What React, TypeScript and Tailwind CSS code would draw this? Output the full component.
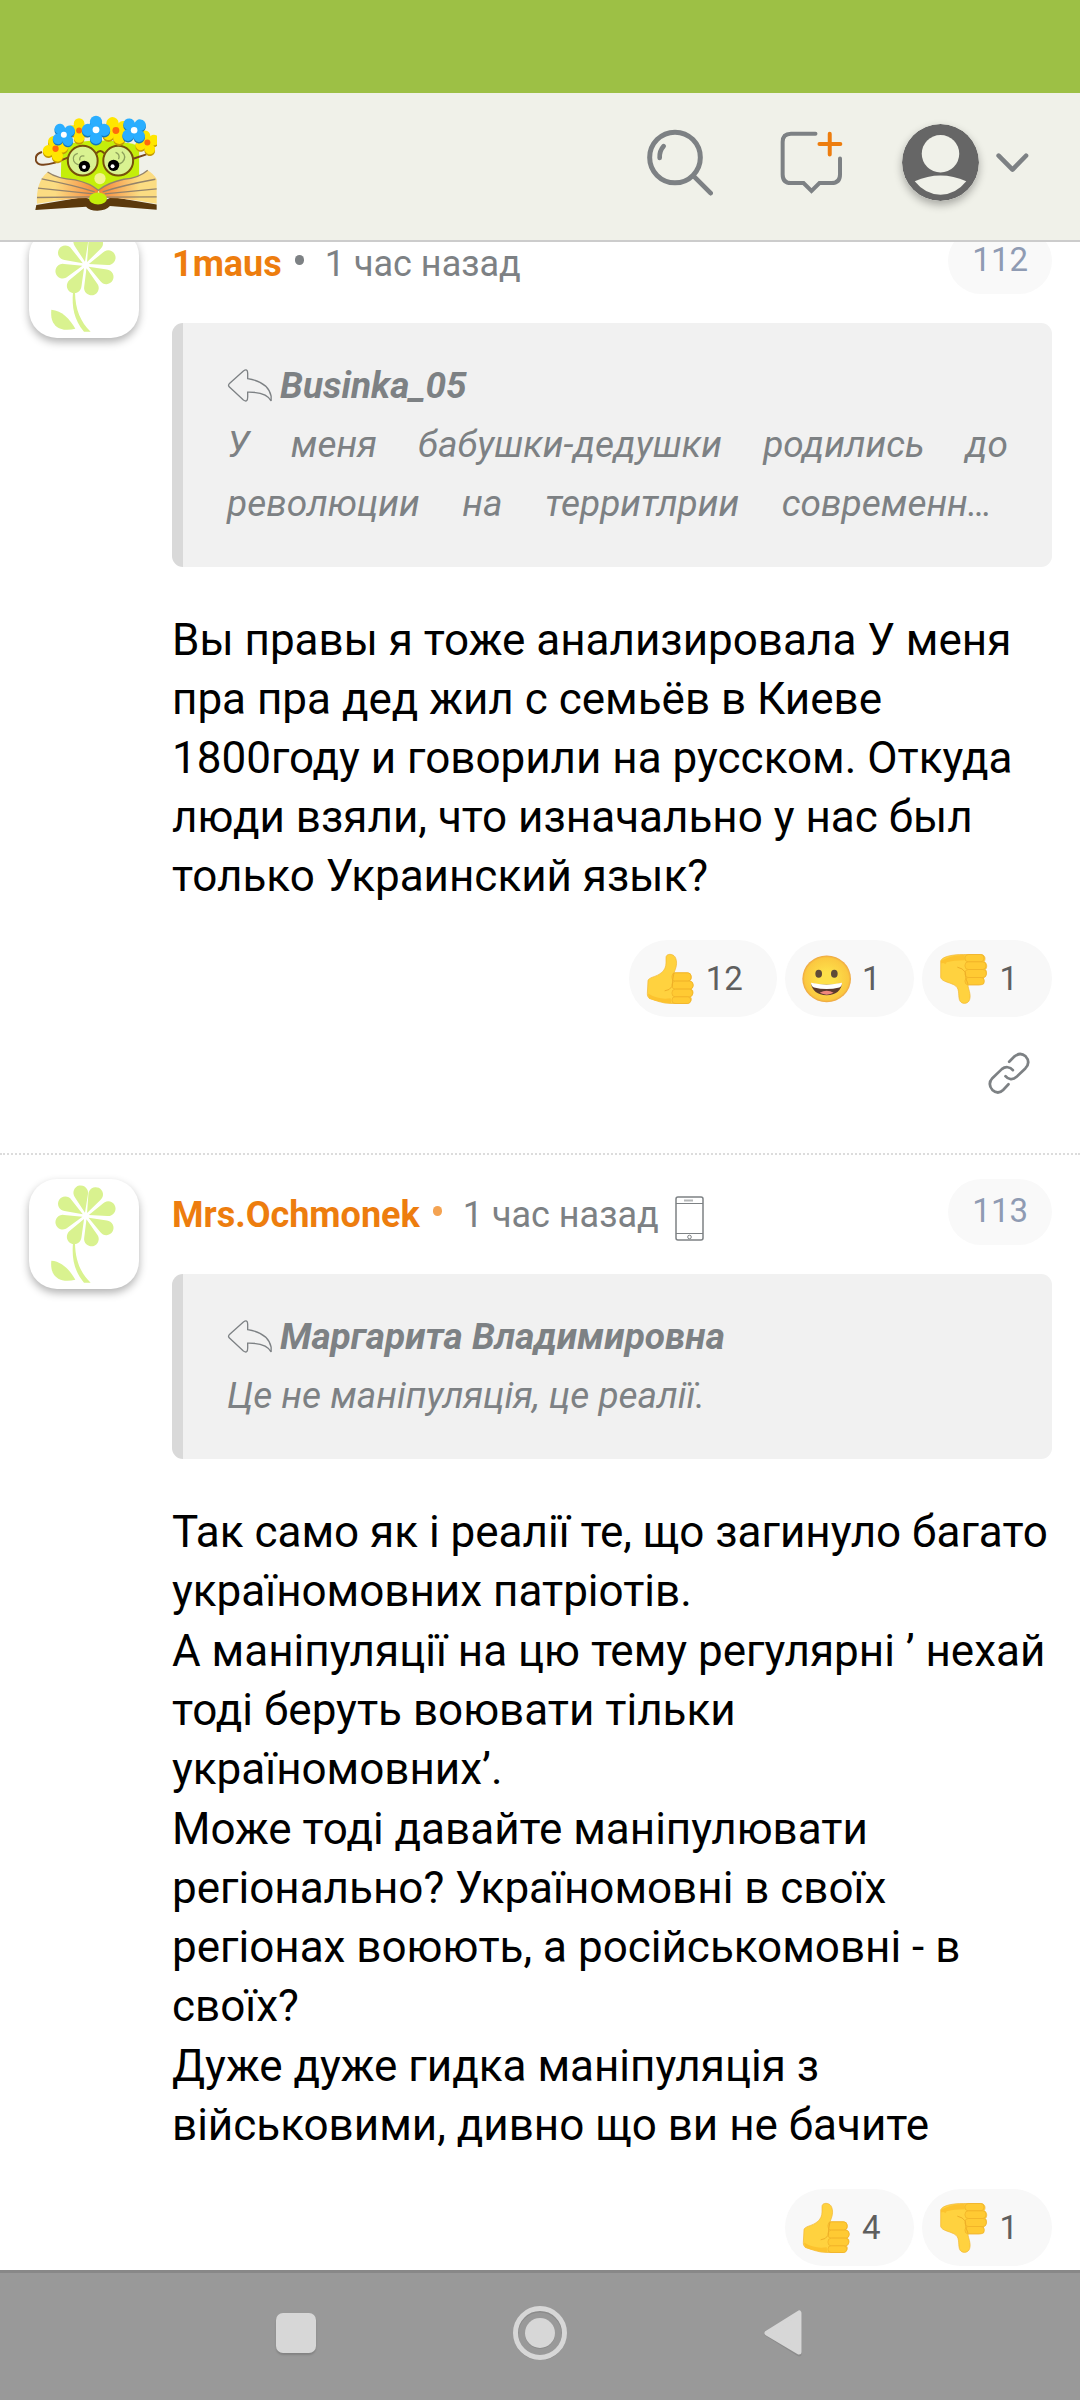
import type { ReactNode } from "react";

function Logo() {
  const blue = [
    { x: 191, y: 158, r: 10, s: 1 },
    { x: 288, y: 143, r: 45, s: 1.15 },
    { x: 403, y: 144, r: 5, s: 1.1 },
  ];
  const yellow = [
    { x: 166, y: 200, r: 30, s: 1.05 },
    { x: 237, y: 145, r: 45, s: 1 },
    { x: 348, y: 145, r: 20, s: 1.15 },
    { x: 443, y: 181, r: 25, s: 1 },
  ];

  return (
    <svg viewBox="104 99 368 288" className="w-[122px] h-24" aria-hidden="true">
      <defs>
        <linearGradient id="page-left" x1="0" x2="1">
          <stop offset="0.3" stopColor="#fbdc82" />
          <stop offset="1" stopColor="#f58238" />
        </linearGradient>
        <linearGradient id="page-right" x1="1" x2="0">
          <stop offset="0.3" stopColor="#fbdc82" />
          <stop offset="1" stopColor="#f58238" />
        </linearGradient>
        <g id="petals">
          <circle cx="-15" cy="-15" r="16" />
          <circle cx="15" cy="-15" r="16" />
          <circle cx="-15" cy="15" r="16" />
          <circle cx="15" cy="15" r="16" />
          <circle r="12" />
        </g>
      </defs>
      <path d="M184 190 Q300 160 418 190 L418 290 L300 330 L182 290 Z" fill="#c4ee0a" />
      {/* book */}
      <path d="M108 370 L238 348 Q265 348 268 352 L322 352 Q330 346 350 348 L471 368 V384 L330 373 Q318 387 292 387 Q268 387 258 375 L105 385 Z" fill="#5b390c" />
      <path d="M142 270 Q170 290 225 294 Q270 304 295 325 L290 350 Q240 344 110 366 Q106 300 142 270 Z" fill="url(#page-left)" />
      <path d="M444 265 Q415 290 372 292 Q325 302 297 325 L300 350 Q350 344 471 366 V292 Q462 276 444 265 Z" fill="url(#page-right)" />
      <g fill="none" stroke="#94836a" strokeWidth="4">
        <path d="M142 270 Q170 290 225 294 Q270 304 295 325 Q325 302 372 292 Q415 290 444 265" />
        <path d="M124 291 Q220 310 284 330 M113 319 L280 336 M110 347 L276 345" />
        <path d="M467 292 Q370 310 308 330 M471 321 L314 336 M471 345 L318 346" />
      </g>
      <ellipse cx="294" cy="350" rx="27" ry="18" fill="#c4ee0a" />
      <circle cx="300" cy="290" r="17" fill="#f3f38e" />
      {/* glasses */}
      <path d="M125 210 Q103 216 107 236 Q113 257 165 242 L205 226 M400 230 L440 217" fill="none" stroke="#79451a" strokeWidth="6" />
      <g fill="#d9f291" stroke="#76500b" strokeWidth="6">
        <circle cx="248" cy="236" r="45" />
        <circle cx="355" cy="236" r="45" />
      </g>
      <path d="M289 214 Q301 199 313 214" fill="none" stroke="#76500b" strokeWidth="6" />
      <g fill="none" stroke="#8da05c" strokeWidth="4">
        <path d="M233 214 Q215 220 221 237 Q228 249 242 250 M253 222 Q237 219 239 235" />
        <path d="M366 209 Q382 224 368 240 Q362 246 354 246 M347 211 Q362 216 356 232" />
      </g>
      <circle cx="253" cy="253" r="17" />
      <circle cx="341" cy="250" r="17" />
      <circle cx="252" cy="255" r="6" fill="#fff" />
      <circle cx="338" cy="253" r="6" fill="#fff" />
      {/* wreath */}
      {yellow.map((f) => (
        <g key={f.x} transform={`translate(${f.x} ${f.y}) scale(${f.s})`}>
          <use href="#petals" fill="#c49a05" transform={`translate(0 5) rotate(${f.r})`} />
          <use href="#petals" fill="#ffe600" transform={`rotate(${f.r})`} />
          <circle r="9" fill="#ff6a0c" />
        </g>
      ))}
      {blue.map((f) => (
        <g key={f.x} transform={`translate(${f.x} ${f.y}) scale(${f.s})`}>
          <use href="#petals" fill="#1476b8" transform={`translate(0 4) rotate(${f.r})`} />
          <use href="#petals" fill="#2aaeff" transform={`rotate(${f.r})`} />
          <circle r="9" fill="#fff" />
        </g>
      ))}
    </svg>
  );
}

function SearchIcon() {
  return (
    <svg viewBox="81 122 198 200" className="w-[66px] h-[67px]" fill="none" stroke="#7d8184" strokeLinecap="round" aria-hidden="true">
      <circle cx="165" cy="207" r="76" strokeWidth="15" />
      <path d="M221 263 L272 314" strokeWidth="14" />
      <path d="M131 173 Q118 187 119 208" strokeWidth="14" />
    </svg>
  );
}

function NewMessageIcon() {
  return (
    <svg viewBox="482 127 188 190" className="w-[63px] h-[63px]" fill="none" strokeWidth="12" strokeLinecap="round" aria-hidden="true">
      <path d="M588 135 H514 Q489 135 489 160 V258 Q489 284 514 284 H552 L576 308 L600 284 H636 Q662 284 662 258 V210" stroke="#7d8184" />
      <path d="M631 135 V198 M600 166 H663" stroke="#ed7d0e" />
    </svg>
  );
}

function UserIcon() {
  return (
    <svg viewBox="0 0 230 230" className="w-[77px] h-[77px] rounded-full shadow-[0_4px_8px_rgba(0,0,0,0.3)]" aria-hidden="true">
      <circle cx="115" cy="115" r="115" fill="#666" />
      <circle cx="115" cy="89" r="56" fill="#f0f1e9" />
      <path d="M38 171 Q115 136 192 171 Q160 211 115 211 Q70 211 38 171 Z" fill="#f0f1e9" />
    </svg>
  );
}

function ChevronIcon() {
  return (
    <svg viewBox="1128 187 100 60" className="w-[33px] h-5" fill="none" stroke="#7d8184" strokeWidth="14" strokeLinecap="round" strokeLinejoin="round" aria-hidden="true">
      <path d="M1136 195 L1178 237 L1219 195" />
    </svg>
  );
}

function Flower() {
  const petals = [258, 295, 342, 30, 76, 119, 165, 211];

  return (
    <svg viewBox="87 444 330 330" className="w-full h-full" fill="#d9f28f" aria-hidden="true">
      {petals.map((angle) => (
        <path key={angle} d="M0 -10 L-20 -62 A22 22 0 1 1 20 -62 Z" transform={`translate(257 555) rotate(${angle + 90})`} />
      ))}
      <path d="M219 636 C215 680 222 720 252 755 L272 755 C242 726 226 690 225 636 Z" />
      <path d="M154 689 C186 691 210 718 226 746 C190 756 148 746 154 689 Z" />
    </svg>
  );
}

function ReplyIcon() {
  return (
    <svg viewBox="228 418 138 106" className="w-[46px] h-[35px]" fill="none" stroke="#7d8184" strokeWidth="4" aria-hidden="true">
      <path d="M234 466 L277 427 Q290 418 290 434 V450 Q352 460 361 503 V518 Q348 490 290 491 V506 Q290 524 277 515 L234 475 Q230 470 234 466 Z" />
    </svg>
  );
}

function PhoneIcon() {
  return (
    <svg viewBox="0 0 29 46" className="w-[29px] h-[46px]" fill="none" stroke="#7d8184" aria-hidden="true">
      <rect x="1" y="1" width="27" height="43" rx="2" strokeWidth="1.5" />
      <path d="M1 7.5 H28 M1 37.5 H28" />
      <path d="M9 4.5 H18" strokeWidth="2" stroke="#b5b7b8" />
      <circle cx="14.5" cy="41" r="1.8" />
    </svg>
  );
}

function LinkIcon() {
  return (
    <svg viewBox="1165 396 125 125" className="w-[42px] h-[42px]" fill="none" stroke="#7d8184" strokeWidth="8" strokeLinecap="round" aria-hidden="true">
      <path d="M1228 425 L1244 409 C1256 399 1268 401 1277 409 C1287 420 1287 433 1276 445 L1250 470 C1239 480 1225 478 1217 468" />
      <path d="M1226 492 L1210 509 C1200 519 1188 518 1178 509 C1168 497 1168 485 1178 474 L1206 447 C1217 438 1231 440 1239 450" />
    </svg>
  );
}

function ThumbUp() {
  return (
    <svg viewBox="132 101 147 155" className="w-[49px] h-[52px]" aria-hidden="true">
      <path d="M138 183 C140 174 160 172 172 164 C188 154 192 142 192 128 V114 C192 101 216 101 221 116 C227 132 222 145 216 160 H256 C270 160 272 180 262 184 C278 188 276 206 266 208 C277 212 274 229 264 231 C272 236 268 251 255 252 H206 C180 252 160 242 142 237 C137 232 136 228 136 222 Z" fill="#ffd23f" stroke="#f2b52f" strokeWidth="2" />
      <path d="M138 222 Q170 242 206 236 L208 251 Q175 250 142 237 Z" fill="#fcc22e" />
      <g fill="#ffca33" stroke="#eeaf27" strokeWidth="2">
        <rect x="210" y="160" width="57" height="25" rx="10" />
        <rect x="210" y="185" width="63" height="24" rx="10" />
        <rect x="210" y="209" width="62" height="23" rx="10" />
        <rect x="210" y="232" width="56" height="20" rx="9" />
      </g>
      <path d="M216 160 Q211 178 211 200 Q203 213 188 214" fill="none" stroke="#eeaf27" strokeWidth="3" />
    </svg>
  );
}

function ThumbDown() {
  return (
    <svg viewBox="1017 101 147 155" className="w-[49px] h-[52px]" aria-hidden="true">
      <path d="M1022 124 C1028 110 1060 105 1090 105 H1142 C1156 105 1158 120 1152 127 C1162 130 1162 146 1156 150 C1162 155 1160 172 1150 174 C1152 188 1146 195 1136 196 H1104 C1104 208 1114 224 1109 240 C1105 255 1082 256 1078 240 C1074 222 1080 206 1062 196 C1046 188 1026 186 1022 174 Z" fill="#ffd23f" stroke="#f2b52f" strokeWidth="2" />
      <path d="M1023 124 Q1050 108 1094 106 V122 Q1060 122 1040 128 L1036 134 Q1030 128 1023 132 Z" fill="#fcc22e" />
      <g fill="#ffca33" stroke="#eeaf27" strokeWidth="2">
        <rect x="1095" y="105" width="57" height="22" rx="10" />
        <rect x="1095" y="127" width="63" height="23" rx="10" />
        <rect x="1095" y="150" width="64" height="24" rx="10" />
        <rect x="1095" y="174" width="58" height="22" rx="10" />
      </g>
      <path d="M1104 194 Q1096 180 1096 158 Q1088 146 1072 143" fill="none" stroke="#eeaf27" strokeWidth="3" />
    </svg>
  );
}

function Grin() {
  return (
    <svg viewBox="602 100 147 155" className="w-[49px] h-[52px]" aria-hidden="true">
      <defs>
        <radialGradient id="grin">
          <stop offset="0.3" stopColor="#fde04a" />
          <stop offset="0.9" stopColor="#fbc840" />
          <stop offset="1" stopColor="#eda542" />
        </radialGradient>
      </defs>
      <ellipse cx="676" cy="177" rx="73" ry="70" fill="url(#grin)" />
      <ellipse cx="652" cy="162" rx="10" ry="12" fill="#5f4a38" />
      <ellipse cx="699" cy="162" rx="10" ry="12" fill="#5f4a38" />
      <path d="M629 190 Q676 200 722 190 Q718 224 676 226 Q634 224 629 190 Z" fill="#5b3a2e" />
      <path d="M629 189 Q676 200 722 189 Q722 200 714 203 Q676 212 638 203 Q629 199 629 189 Z" fill="#fff" />
      <path d="M655 219 Q676 206 697 219 Q676 230 655 219 Z" fill="#f0877c" />
    </svg>
  );
}

function Reaction({ label, count, children }: { label: string; count: number; children: ReactNode }) {
  return (
    <button aria-label={`${label} ${count}`} className="flex items-center gap-[11px] h-[77px] pl-[17px] pr-[34px] rounded-full bg-[#f8f8f8] text-[33px] leading-[40px] text-[#5f5f5f]">
      {children}
      <span>{count}</span>
    </button>
  );
}

interface CommentProps {
  author: string;
  number: number;
  bullet: string;
  mobile?: boolean;
  quoteAuthor: string;
  quote: string;
  reactions: ReactNode;
  link?: boolean;
  children: ReactNode;
}

function Comment({ author, number, bullet, mobile, quoteAuthor, quote, reactions, link, children }: CommentProps) {
  // shortened quotes keep their last line justified, with room left after the ellipsis
  const shortened = quote.endsWith("…");

  return (
    <article className="flex items-start gap-[33px] pt-6 pl-[29px] pr-7 border-t-2 border-dotted border-[#dcdcdc]">
      <a href="#profile" aria-label={author} className="shrink-0 w-[110px] h-[110px] rounded-[28px] bg-white shadow-[0_4px_8px_rgba(0,0,0,0.3)]">
        <Flower />
      </a>
      <div className="flex-1 min-w-0">
        <header className="flex items-start justify-between mb-[29px]">
          <div className="flex items-center h-[66px] pt-[6px] text-[36px] leading-[59px] text-[#7d8184]">
            <a href="#profile" className="font-bold text-[#ed7d0e]">{author}</a>
            <span className={`w-[9px] h-[10px] mx-[13px] mb-2 rounded-full ${bullet}`} />
            <time className="ml-2">1 час назад</time>
            {mobile && <span className="ml-4 pt-2"><PhoneIcon /></span>}
          </div>
          <a href="#comment" className="h-[66px] px-6 rounded-full bg-[#f9f9f9] text-[33px] leading-[64px] text-[#8f9bb3]">{number}</a>
        </header>
        <blockquote className="pt-[33px] pb-[34px] px-11 border-l-[11px] border-[#d9d9d9] rounded-[11px] bg-[#f1f1f1] text-[37px] leading-[59px] italic text-[#7d8184]">
          <div className="flex items-center gap-[7px] font-bold">
            <ReplyIcon />
            <span>{quoteAuthor}</span>
          </div>
          <p className={shortened ? "text-justify [text-align-last:justify] after:inline-block after:w-4 after:content-['']" : "text-justify"}>{quote}</p>
        </blockquote>
        <div className="mt-11 space-y-px text-[44px] leading-[59px] text-black">{children}</div>
        <div className="flex justify-end gap-2 mt-[34px]">{reactions}</div>
        {link && (
          <div className="flex justify-end pt-[35px] pb-[59px] pr-[22px]">
            <button aria-label="Ссылка"><LinkIcon /></button>
          </div>
        )}
      </div>
    </article>
  );
}

export default function App() {
  return (
    <div className="flex flex-col h-screen overflow-hidden bg-white font-[Roboto,sans-serif]">
      <div className="shrink-0 h-[93px] bg-[#9dc045]" />
      <header className="relative z-10 shrink-0 flex items-center justify-between h-[149px] pl-[35px] pr-[51px] pb-2 bg-[#f0f1e9] border-b-2 border-[#ccc]">
        <a href="#home" aria-label="Главная"><Logo /></a>
        <nav className="flex items-center">
          <button aria-label="Поиск" className="mr-[67px]"><SearchIcon /></button>
          <button aria-label="Новая тема" className="mr-[59px]"><NewMessageIcon /></button>
          <button aria-label="Профиль" className="flex items-center gap-[17px]">
            <UserIcon />
            <ChevronIcon />
          </button>
        </nav>
      </header>

      <main className="flex-1 min-h-0 -mt-10">
        <Comment
          author="1maus"
          number={112}
          bullet="bg-[#7d8184]"
          quoteAuthor="Businka_05"
          quote="У меня бабушки-дедушки родились до революции на территлрии современн…"
          reactions={
            <>
              <Reaction label="Нравится" count={12}><ThumbUp /></Reaction>
              <Reaction label="Смешно" count={1}><Grin /></Reaction>
              <Reaction label="Не нравится" count={1}><ThumbDown /></Reaction>
            </>
          }
          link
        >
          <p>Вы правы я тоже анализировала У меня пра пра дед жил с семьёв в Киеве 1800году и говорили на русском. Откуда люди взяли, что изначально у нас был только Украинский язык?</p>
        </Comment>
        <Comment
          author="Mrs.Ochmonek"
          number={113}
          bullet="bg-[#f4a352]"
          mobile
          quoteAuthor="Маргарита Владимировна"
          quote="Це не маніпуляція, це реалії."
          reactions={
            <>
              <Reaction label="Нравится" count={4}><ThumbUp /></Reaction>
              <Reaction label="Не нравится" count={1}><ThumbDown /></Reaction>
            </>
          }
        >
          <p>Так само як і реалії те, що загинуло багато україномовних патріотів.</p>
          <p>А маніпуляції на цю тему регулярні ’ нехай тоді беруть воювати тільки україномовних’.</p>
          <p>Може тоді давайте маніпулювати регіонально? Україномовні в своїх регіонах воюють, а російськомовні - в своїх?</p>
          <p>Дуже дуже гидка маніпуляція з військовими, дивно що ви не бачите</p>
        </Comment>
      </main>

      <nav className="relative z-10 shrink-0 flex items-center justify-center gap-[197px] h-[130px] pb-2 pr-[2px] bg-[#999] border-t-[3px] border-[#888] text-[#d7d7d7]">
        <button aria-label="Недавние" className="w-10 h-10 rounded-[7px] bg-[#d7d7d7] shadow-[0_2px_2px_rgba(0,0,0,0.15)]" />
        <button aria-label="Домой">
          <svg viewBox="0 0 54 54" className="w-[54px] h-[54px]" aria-hidden="true">
            <circle cx="27" cy="28" r="24" fill="none" stroke="#8b8b8b" strokeWidth="5" />
            <circle cx="27" cy="28" r="15" fill="#8b8b8b" />
            <circle cx="27" cy="27" r="24.5" fill="none" stroke="currentColor" strokeWidth="5" />
            <circle cx="27" cy="27" r="15" fill="currentColor" />
          </svg>
        </button>
        <button aria-label="Назад">
          <svg viewBox="0 0 38 48" className="w-[38px] h-12" stroke="currentColor" strokeWidth="5" strokeLinejoin="round" aria-hidden="true">
            <path d="M3 25 L35 5 V45 Z" fill="#8b8b8b" stroke="#8b8b8b" />
            <path d="M3 24 L35 4 V43 Z" fill="currentColor" />
          </svg>
        </button>
      </nav>
    </div>
  );
}
